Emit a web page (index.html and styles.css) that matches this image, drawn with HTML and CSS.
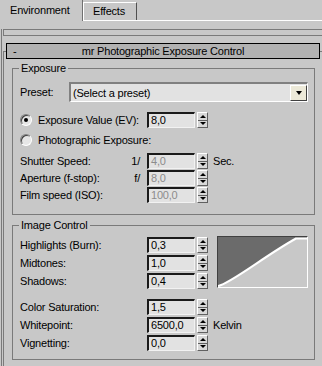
FILE: index.html
```html
<!DOCTYPE html>
<html lang="en">
<head>
<meta charset="UTF-8">
<meta name="viewport" content="width=device-width, initial-scale=1.0">
<title>Environment and Effects</title>
<link rel="stylesheet" href="styles.css">
</head>
<body>
<div class="tabs">
    <div class="tab active">Environment</div>
    <div class="tab">Effects</div>
</div>

<div class="panel">
    <div class="strip"></div>
    <div class="rollout">
        <div class="rollout-head">
            <span class="toggle">-</span>
            <span class="rollout-title">mr Photographic Exposure Control</span>
        </div>

        <div class="group exposure">
            <div class="group-title">Exposure</div>
            <div class="row preset-row">
                <span class="preset-label">Preset:</span>
                <div class="select">
                    <span class="select-text">(Select a preset)</span>
                    <span class="select-btn"></span>
                </div>
            </div>
            <div class="row ev-row">
                <span class="radio checked"></span>
                <span class="label radio-label">Exposure Value (EV):</span>
                <span class="num">8,0</span>
                <span class="spin"><i></i><i></i></span>
            </div>
            <div class="row photo-row">
                <span class="radio"></span>
                <span class="label radio-label">Photographic Exposure:</span>
            </div>
            <div class="row first">
                <span class="label">Shutter Speed:<span class="pre">1/</span></span>
                <span class="num disabled">4,0</span>
                <span class="spin"><i></i><i></i></span>
                <span class="unit">Sec.</span>
            </div>
            <div class="row">
                <span class="label">Aperture (f-stop):<span class="pre">f/</span></span>
                <span class="num disabled">8,0</span>
                <span class="spin"><i></i><i></i></span>
            </div>
            <div class="row">
                <span class="label">Film speed (ISO):</span>
                <span class="num disabled">100,0</span>
                <span class="spin"><i></i><i></i></span>
            </div>
        </div>

        <div class="group image">
            <div class="group-title">Image Control</div>
            <div class="tone">
                <div class="tone-rows">
                    <div class="row">
                        <span class="label">Highlights (Burn):</span>
                        <span class="num">0,3</span>
                        <span class="spin"><i></i><i></i></span>
                    </div>
                    <div class="row wide">
                        <span class="label">Midtones:</span>
                        <span class="num">1,0</span>
                        <span class="spin"><i></i><i></i></span>
                    </div>
                    <div class="row wide">
                        <span class="label">Shadows:</span>
                        <span class="num">0,4</span>
                        <span class="spin"><i></i><i></i></span>
                    </div>
                </div>
                <svg class="curve" viewBox="0 0 89 50" width="89" height="50">
                    <path d="M0 0H89V1.5H78C48 18 12 47 0 49Z" fill="#6b6b6b"/>
                    <path d="M0 49C12 47 48 18 78 1.5H89" fill="none" stroke="#fff" stroke-width="2"/>
                </svg>
            </div>
            <div class="row sat-row">
                <span class="label">Color Saturation:</span>
                <span class="num">1,5</span>
                <span class="spin"><i></i><i></i></span>
            </div>
            <div class="row wide">
                <span class="label">Whitepoint:</span>
                <span class="num">6500,0</span>
                <span class="spin"><i></i><i></i></span>
                <span class="unit">Kelvin</span>
            </div>
            <div class="row wide">
                <span class="label">Vignetting:</span>
                <span class="num">0,0</span>
                <span class="spin"><i></i><i></i></span>
            </div>
        </div>
    </div>
</div>
</body>
</html>
```

FILE: styles.css
```css
body {
    margin: 0;
    background: #c8c8c8;
    font-family: "Liberation Sans", Arial, sans-serif;
    font-size: 11px;
    letter-spacing: -0.2px;
    white-space: nowrap;
    color: #000;
    overflow: hidden;
}

/* tabs */
.tabs {
    display: flex;
    align-items: flex-start;
    height: 20px;
    border-bottom: 1px solid #fff;
}
.tab {
    box-sizing: border-box;
    line-height: 17px;
}
.tab.active {
    width: 83px;
    height: 21px;
    margin-bottom: -1px;
    padding: 2px 0 0 10px;
    background: #c8c8c8;
    border-right: 1px solid #707070;
}
.tab + .tab {
    width: 54px;
    height: 18px;
    margin-top: 2px;
    padding-left: 9px;
    border-top: 1px solid #fff;
    border-left: 1px solid #fff;
    border-right: 1px solid #505050;
}

/* rollout panel */
.panel {
    margin: 8px 0 0 1px;
    border-left: 1px solid #7a7a7a;
}
.strip {
    height: 5px;
    margin-left: 1px;
    border: 1px solid #7a7a7a;
    border-right: none;
}
.rollout {
    margin: 15px 0 0 1px;
    border-top: 1px solid #7a7a7a;
    border-left: 1px solid #7a7a7a;
    padding-bottom: 20px;
}
.rollout-head {
    display: grid;
    grid-template-columns: 1fr auto 1fr;
    align-items: center;
    height: 16px;
    box-sizing: border-box;
    margin: -9px 2px 0 2px;
    background: #b2b2b2;
    border: 1px solid #000;
    line-height: 14px;
}
.toggle {
    padding-left: 6px;
}

/* group boxes */
.group {
    margin: 9px 7px 0 8px;
    padding: 0 6px 11px 7px;
    border: 1px solid #7a7a7a;
}
.group.image {
    margin-top: 10px;
    padding-bottom: 8px;
}
.group-title {
    width: fit-content;
    margin: -7px 0 0 -1px;
    padding: 0 2px;
    line-height: 13px;
    background: #c8c8c8;
}

.row {
    display: flex;
    align-items: center;
    height: 16px;
    margin-top: 1px;
    line-height: 16px;
}
.row.wide {
    margin-top: 2px;
}
.preset-row {
    height: 20px;
    margin-top: 7px;
}
.ev-row {
    margin-top: 10px;
}
.photo-row {
    margin-top: 4px;
}
.row.first {
    margin-top: 5px;
}
.group.image .tone {
    margin-top: 5px;
}
.tone .row:first-child {
    margin-top: 0;
}
.sat-row {
    margin-top: 10px;
}

.label {
    display: flex;
    width: 127px;
    flex: none;
}
.radio-label {
    width: 109px;
}
.pre {
    margin: 0 7px 0 auto;
}
.preset-label {
    width: 49px;
    flex: none;
}
.unit {
    margin-left: 5px;
}

/* radio buttons */
.radio {
    display: flex;
    align-items: center;
    justify-content: center;
    width: 12px;
    height: 12px;
    box-sizing: border-box;
    margin-right: 6px;
    border-radius: 50%;
    border: 1px solid;
    border-color: #808080 #fff #fff #808080;
    background: #e6e6e6;
    box-shadow: inset 1px 1px 0 #404040;
}
.radio.checked::after {
    content: "";
    width: 4px;
    height: 4px;
    border-radius: 50%;
    background: #000;
}

/* dropdown */
.select {
    display: flex;
    flex: 1;
    height: 20px;
    box-sizing: border-box;
    padding-top: 1px;
    border-style: solid;
    border-width: 2px 1px 1px 2px;
    border-color: #808080 #fff #fff #808080;
    background: #e2e2e2;
}
.select-text {
    flex: 1;
    padding-left: 2px;
    line-height: 16px;
}
.select-btn {
    display: flex;
    align-items: center;
    justify-content: center;
    width: 17px;
    height: 16px;
    box-sizing: border-box;
    background: #ece9d8;
    border: 1px solid;
    border-color: #fff #404040 #404040 #fff;
}
.select-btn::after {
    content: "";
    border-left: 3.5px solid transparent;
    border-right: 3.5px solid transparent;
    border-top: 4px solid #000;
}

/* number fields */
.num {
    width: 48px;
    height: 16px;
    box-sizing: border-box;
    padding-left: 2px;
    border-style: solid;
    border-width: 2px 1px 1px 2px;
    border-color: #1a1a1a #f2f2f2 #f2f2f2 #1a1a1a;
    background: #e2e2e2;
    line-height: 13px;
}
.num.disabled {
    color: #8c8c8c;
}
.spin {
    display: flex;
    flex-direction: column;
    width: 11px;
    height: 16px;
    box-sizing: border-box;
    margin-left: 2px;
    border: 1px solid;
    border-color: #fff #606060 #606060 #fff;
    background: #d8d8d8;
}
.spin i {
    display: flex;
    flex: 1;
    align-items: center;
    justify-content: center;
}
.spin i + i {
    border-top: 1px solid #606060;
}
.spin i::after {
    content: "";
    border-left: 3px solid transparent;
    border-right: 3px solid transparent;
}
.spin i:first-child::after {
    border-bottom: 3px solid #000;
}
.spin i:last-child::after {
    border-top: 3px solid #000;
}

/* tone curve preview */
.tone {
    display: flex;
    align-items: flex-start;
}
.curve {
    margin: -1px 0 0 9px;
    border: 1px solid;
    border-color: #404040 #fff #fff #404040;
    background: #c8c8c8;
}
```
